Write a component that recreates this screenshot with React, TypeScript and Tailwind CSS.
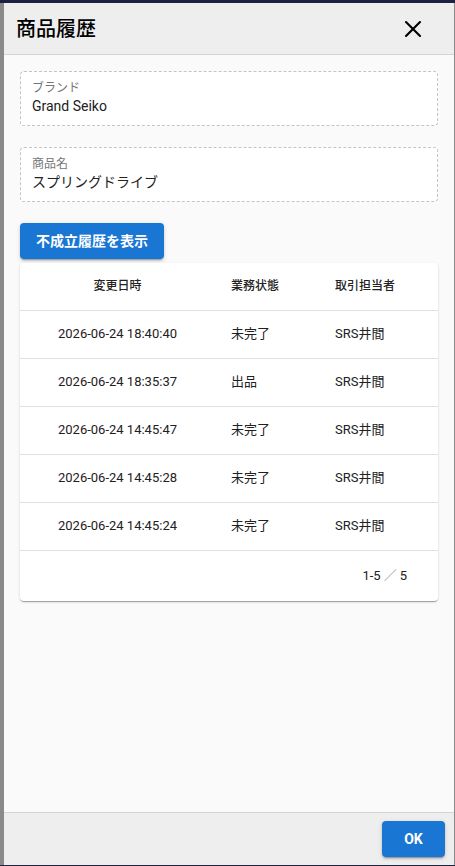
import { X } from "lucide-react";

type HistoryRow = {
  changedAt: string;
  status: string;
  staff: string;
};

const rows: HistoryRow[] = [
  { changedAt: "2026-06-24 18:40:40", status: "未完了", staff: "SRS井間" },
  { changedAt: "2026-06-24 18:35:37", status: "出品", staff: "SRS井間" },
  { changedAt: "2026-06-24 14:45:47", status: "未完了", staff: "SRS井間" },
  { changedAt: "2026-06-24 14:45:28", status: "未完了", staff: "SRS井間" },
  { changedAt: "2026-06-24 14:45:24", status: "未完了", staff: "SRS井間" },
];

const ReadOnlyField = ({ label, value }: { label: string; value: string }) => (
  <div className="rounded border border-dashed border-[#c4c4c4] bg-white px-[11px] pt-2 pb-[9px]">
    <p className="text-[12px] leading-4 text-[#757575]">{label}</p>
    <p className="text-[14px] leading-5 text-[#212121]">{value}</p>
  </div>
);

const App = () => {
  return (
    <div
      className="h-[866px] w-[455px] overflow-hidden border-t-[3px] border-b border-[#1e2140] bg-[#8a8a8a] pl-[4px] pr-px"
      style={{ fontFamily: 'Roboto, "Noto Sans CJK JP", sans-serif' }}
    >
      <div className="flex h-full w-full flex-col bg-[#fafafa]">
        {/* dialog title */}
        <div className="flex h-[52px] shrink-0 items-center justify-between border-b border-[#d4d4d4] bg-[#eeeeee] pl-3 pr-[27px]">
          <h2 className="text-[20px] font-medium text-black">商品履歴</h2>
          <X size={28} strokeWidth={1.8} className="text-black" />
        </div>

        {/* dialog content */}
        <div className="flex flex-1 flex-col px-4 pt-4">
          <div className="flex flex-col gap-[21px]">
            <ReadOnlyField label="ブランド" value="Grand Seiko" />
            <ReadOnlyField label="商品名" value="スプリングドライブ" />
          </div>

          <div className="mt-[21px]">
            <button className="h-9 rounded bg-[#1976d2] px-4 text-[14px] font-bold text-white shadow-[0_3px_1px_-2px_rgba(0,0,0,0.2),0_2px_2px_0_rgba(0,0,0,0.14),0_1px_5px_0_rgba(0,0,0,0.12)]">
              不成立履歴を表示
            </button>
          </div>

          <div className="mt-1 overflow-hidden rounded bg-white shadow-[0_2px_1px_-1px_rgba(0,0,0,0.2),0_1px_1px_0_rgba(0,0,0,0.14),0_1px_3px_0_rgba(0,0,0,0.12)]">
            <table className="w-full border-collapse">
              <thead>
                <tr className="h-[47px] border-b border-[#e0e0e0]">
                  <th className="w-[195px] text-center text-[12px] font-medium text-[#222]">変更日時</th>
                  <th className="w-[104px] pl-4 text-left text-[12px] font-medium text-[#222]">業務状態</th>
                  <th className="pl-4 text-left text-[12px] font-medium text-[#222]">取引担当者</th>
                </tr>
              </thead>
              <tbody>
                {rows.map((row, index) => (
                  <tr key={index} className="h-[48px] border-b border-[#e0e0e0]">
                    <td className="text-center text-[13px] text-[#212121]">{row.changedAt}</td>
                    <td className="pl-4 text-[13px] text-[#212121]">{row.status}</td>
                    <td className="pl-4 text-[13px] text-[#212121]">{row.staff}</td>
                  </tr>
                ))}
              </tbody>
            </table>
            <div className="flex h-[50px] items-center justify-end pr-[31px] text-[13px] text-[#212121]">
              1-5<span className="mx-[3px] text-[#9e9e9e]">／</span>5
            </div>
          </div>
        </div>

        {/* dialog actions */}
        <div className="flex h-[53px] shrink-0 items-start justify-end border-t border-[#d4d4d4] bg-[#eeeeee] pt-2 pr-[9px]">
          <button className="h-9 w-[63px] rounded bg-[#1976d2] text-[14px] font-bold text-white shadow-[0_3px_1px_-2px_rgba(0,0,0,0.2),0_2px_2px_0_rgba(0,0,0,0.14),0_1px_5px_0_rgba(0,0,0,0.12)]">
            OK
          </button>
        </div>
      </div>
    </div>
  );
};

export default App;
